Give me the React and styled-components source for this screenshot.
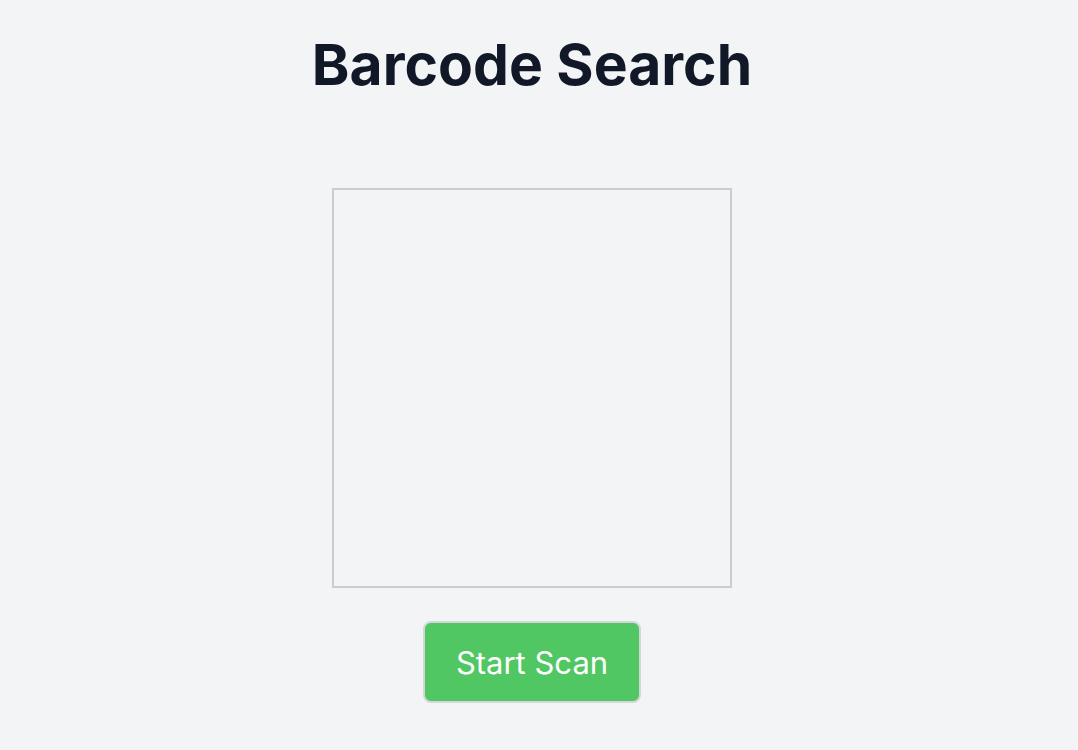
import React from 'react';
import styled, { createGlobalStyle } from 'styled-components';

const GlobalStyle = createGlobalStyle`
  html, body {
    margin: 0;
    padding: 0;
    background-color: #f3f4f6;
    font-family: Inter, "Noto Sans", sans-serif;
  }
`;

const Page = styled.main`
  display: flex;
  flex-direction: column;
  align-items: center;
  padding-top: 29px;
  padding-right: 14px;
`;

const Title = styled.h1`
  margin: 0;
  font-size: 57px;
  line-height: 72px;
  font-weight: 700;
  color: #111827;
`;

const Viewport = styled.div`
  margin-top: 87px;
  width: 400px;
  height: 400px;
  box-sizing: border-box;
  border: 2px solid #cbcccf;
`;

const ScanButton = styled.button`
  margin-top: 33px;
  width: 218px;
  height: 82px;
  box-sizing: border-box;
  border: 2px solid #d4d6da;
  border-radius: 8px;
  background-color: #50c763;
  color: #ffffff;
  font-family: Inter, "Noto Sans", sans-serif;
  font-size: 31px;
  cursor: pointer;
`;

const App = () => {
  return (
    <>
      <GlobalStyle />
      <Page>
        <Title>Barcode Search</Title>
        <Viewport id='reader' />
        <ScanButton>Start Scan</ScanButton>
      </Page>
    </>
  );
};

export default App;
